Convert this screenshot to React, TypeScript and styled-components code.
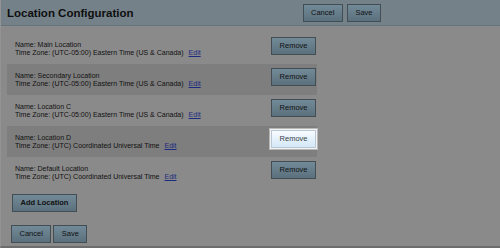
import React, { useState } from "react";
import styled, { createGlobalStyle, css } from "styled-components";

const GlobalStyle = createGlobalStyle`
  * {
    box-sizing: border-box;
  }
  body {
    margin: 0;
    background: #8a8a8a;
    font-family: "Liberation Sans", Arial, sans-serif;
  }
`;

type Location = {
  id: number;
  name: string;
  timeZone: string;
};

const initialLocations: Location[] = [
  { id: 1, name: "Main Location", timeZone: "(UTC-05:00) Eastern Time (US & Canada)" },
  { id: 2, name: "Secondary Location", timeZone: "(UTC-05:00) Eastern Time (US & Canada)" },
  { id: 3, name: "Location C", timeZone: "(UTC-05:00) Eastern Time (US & Canada)" },
  { id: 4, name: "Location D", timeZone: "(UTC) Coordinated Universal Time" },
  { id: 5, name: "Default Location", timeZone: "(UTC) Coordinated Universal Time" },
];

const Page = styled.div`
  height: 248px;
  display: flex;
  flex-direction: column;
  border-left: 1px solid #939393;
  border-bottom: 2px solid #6c6c6c;
`;
const Header = styled.header`
  flex-shrink: 0;
  height: 26px;
  padding-left: 6px;
  background: #748189;
  border-bottom: 1px solid #66737c;
  display: flex;
  align-items: center;
`;
const HeaderBar = styled.div`
  width: 374px;
  display: flex;
  align-items: center;
  justify-content: space-between;
`;
const Title = styled.h1`
  margin: 0;
  font-size: 11.5px;
  font-weight: bold;
  color: #0f0f0f;
`;
const Actions = styled.div<{ gap: number }>`
  display: flex;
  gap: ${p => p.gap}px;
`;
const Button = styled.button<{ bold?: boolean; highlighted?: boolean }>`
  height: 18px;
  padding: 0 7.5px;
  font-family: "Liberation Sans", Arial, sans-serif;
  font-size: 7.5px;
  font-weight: ${p => (p.bold ? "bold" : "normal")};
  color: #111;
  background: linear-gradient(#728a98, #5b707d);
  border: 1px solid #434d54;
  border-radius: 0;
  cursor: pointer;

  ${p =>
    p.highlighted &&
    css`
      position: relative;
      z-index: 1;
      color: #3a3f46;
      background: linear-gradient(#f7fbff, #d3e8f8);
      border: 1px solid #b9c8d4;
      box-shadow: 0 0 0 1px #f2f2f2, 0 0 0 2px #b8b8b8;
    `}
`;
const Content = styled.main`
  flex-grow: 1;
  padding: 7px 0 0 6px;
`;
const List = styled.div`
  width: 310px;
`;
const Row = styled.div<{ shaded: boolean }>`
  display: flex;
  height: 31px;
  background: ${p => (p.shaded ? "#7e7e7e" : "transparent")};
`;
const Info = styled.div`
  flex-grow: 1;
  align-self: center;
  padding-left: 8px;
  font-size: 7px;
  line-height: 8px;
  color: #111;
`;
const EditLink = styled.a`
  margin-left: 5px;
  color: #1c2a80;
  text-decoration: underline;
  cursor: pointer;
`;
const RowAction = styled.div`
  margin: 1px 1px 0 0;
`;
const AddRow = styled.div`
  margin: 3px 0 0 5px;
`;
const Footer = styled.div`
  margin: 13px 0 0 4px;
`;

const App = () => {
  const [locations, setLocations] = useState(initialLocations);
  const highlightedId = 4;

  const remove = (id: number) =>
    setLocations(list => list.filter(l => l.id !== id));

  return (
    <>
      <GlobalStyle />
      <Page>
        <Header>
          <HeaderBar>
            <Title>Location Configuration</Title>
            <Actions gap={4}>
              <Button>Cancel</Button>
              <Button>Save</Button>
            </Actions>
          </HeaderBar>
        </Header>
        <Content>
          <List>
            {locations.map((loc, i) => (
              <Row key={loc.id} shaded={i % 2 === 1}>
                <Info>
                  Name: {loc.name}
                  <br />
                  Time Zone: {loc.timeZone}
                  <EditLink>Edit</EditLink>
                </Info>
                <RowAction>
                  <Button
                    highlighted={loc.id === highlightedId}
                    onClick={() => remove(loc.id)}
                  >
                    Remove
                  </Button>
                </RowAction>
              </Row>
            ))}
          </List>
          <AddRow>
            <Button bold>Add Location</Button>
          </AddRow>
          <Footer>
            <Actions gap={2}>
              <Button>Cancel</Button>
              <Button>Save</Button>
            </Actions>
          </Footer>
        </Content>
      </Page>
    </>
  );
};

export default App;
